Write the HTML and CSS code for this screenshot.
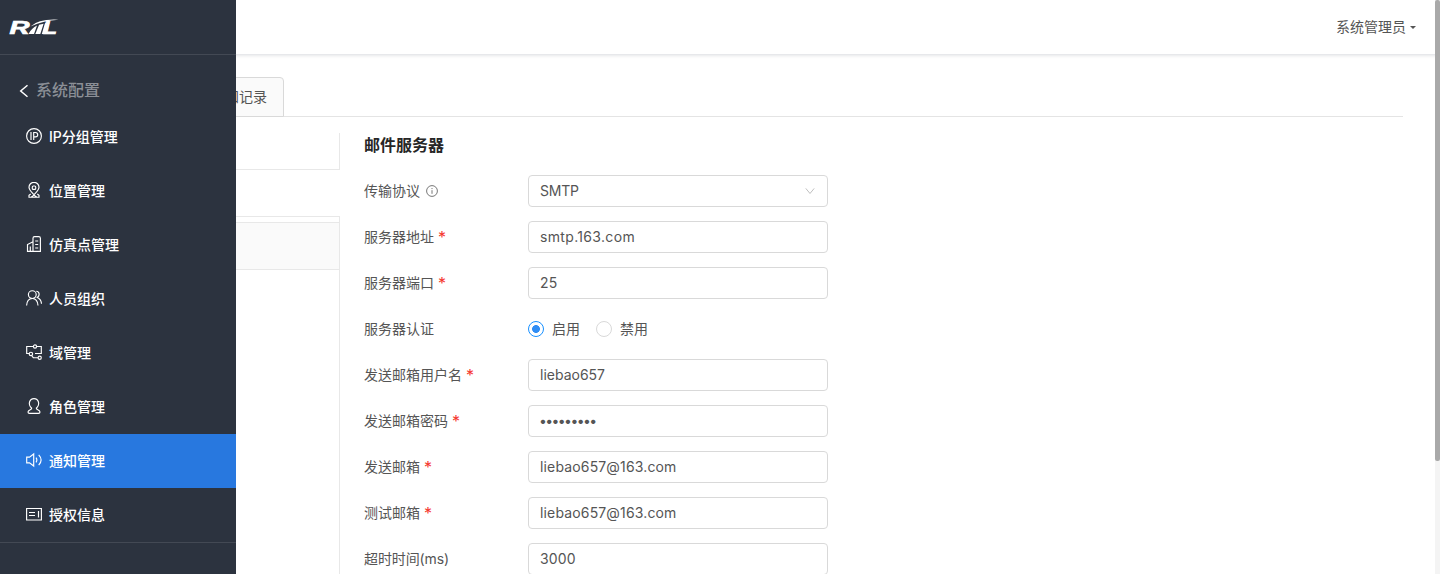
FILE: index.html
```html
<!DOCTYPE html>
<html lang="zh-CN">
<head>
<meta charset="utf-8">
<title>通知管理</title>
<link rel="stylesheet" href="styles.css">
</head>
<body>
<div class="app">
  <header class="topbar"><span class="user">系统管理员</span><i class="caret"></i></header>

  <main class="content">
    <nav class="tabs"><span class="tab">通知记录</span></nav>
    <div class="columns">
      <section class="channels">
        <div class="channel first"></div>
        <div class="channel current"></div>
        <div class="spacer"></div>
        <div class="channel shaded"></div>
        <div class="rest"></div>
      </section>
      <form class="form">
        <h2 class="form-title">邮件服务器</h2>
        <div class="row"><label class="label">传输协议
          <svg class="info" viewBox="0 0 12 12"><circle cx="6" cy="6" r="5.4"/><path d="M6 5.2v3.6M6 3v1.1"/></svg></label>
          <div class="field select">SMTP<svg class="chevron" viewBox="0 0 10 8"><path d="M.8 1.4 5 6.5l4.2-5.1"/></svg></div></div>
        <div class="row"><label class="label">服务器地址<b class="req">*</b></label><div class="field host">smtp.163.com</div></div>
        <div class="row"><label class="label">服务器端口<b class="req">*</b></label><div class="field">25</div></div>
        <div class="row"><label class="label">服务器认证</label>
          <div class="radios"><i class="radio on"></i><span>启用</span><i class="radio"></i><span>禁用</span></div></div>
        <div class="row"><label class="label">发送邮箱用户名<b class="req">*</b></label><div class="field user-name">liebao657</div></div>
        <div class="row"><label class="label">发送邮箱密码<b class="req">*</b></label><div class="field password">•••••••••</div></div>
        <div class="row"><label class="label">发送邮箱<b class="req">*</b></label><div class="field">liebao657@163.com</div></div>
        <div class="row"><label class="label">测试邮箱<b class="req">*</b></label><div class="field">liebao657@163.com</div></div>
        <div class="row"><label class="label ms">超时时间(ms)</label><div class="field">3000</div></div>
      </form>
    </div>
  </main>

  <aside class="sidebar">
    <div class="brand">
      <svg class="logo" viewBox="0 0 52 30">
        <g class="logo-text"><text x="1.500" y="21.700" textLength="20" lengthAdjust="spacingAndGlyphs">R</text><text x="35" y="21.700" textLength="14" lengthAdjust="spacingAndGlyphs">L</text></g>
        <g transform="translate(0 6)">
          <path d="M20.500 16h5.500l3-8.500Q23.500 10 20.500 16zM27.300 16h5l3.300-10.200-4.500 1zM33.800 16h4.500L41.500 4.500l-4.500.8z"/>
          <path d="M22.500 8.400Q31 .6 50.500 1.700 36 2.500 22.500 8.400z"/>
        </g>
      </svg>
    </div>
    <div class="menu">
      <div class="menu-title"><svg class="back" viewBox="0 0 10 14"><path d="M8.500 1.200 1.700 7l6.800 5.800"/></svg><span>系统配置</span></div>
      <div class="item"><svg class="icon" viewBox="0 0 16 16"><circle cx="8" cy="8" r="7.400"/><path d="M5 4v8M7.700 12V4.500h1.800a2.200 2.200 0 0 1 0 4.400H7.700"/></svg>IP分组管理</div>
      <div class="item"><svg class="icon" viewBox="0 0 16 16"><path d="M8 12.700C5.500 10 3 8 3 5.300a5 5 0 0 1 10 0C13 8 10.500 10 8 12.700z"/><rect x="6.300" y="4" width="3.400" height="3.400" rx="1"/><path d="M4.700 12 3 13.200v2h10v-2L11.300 12M5 15.200l3-2 3 2"/></svg>位置管理</div>
      <div class="item"><svg class="icon" viewBox="0 0 16 16"><path d="M7 15.400V2.200Q7 .6 8.500.6h4.200q1.700 0 1.700 1.600v13.200H1.500V8.600L7 5.800"/><path d="M4.300 10.500v4.900M9.200 5h3M9.200 8.500h3M9.200 12h3"/></svg>仿真点管理</div>
      <div class="item"><svg class="icon" viewBox="0 0 16 16"><circle cx="6.300" cy="4.600" r="3.900"/><path d="M.6 15.500C.8 11.500 3 8.700 6.300 8.500s5.600 3 5.700 7M10.300 1.200c3 0 4 4.200 1 6.300 2.500 1 4 3.500 4.200 6.300"/></svg>人员组织</div>
      <div class="item"><svg class="icon" viewBox="0 0 16 16"><path d="M7 2.500H.7v7h2.500M11 2.500h4.300v7H9M5.500 11.500 7.300 13.700H12"/><circle cx="9" cy="2.500" r="1.600"/><circle cx="4.900" cy="9.900" r="1.700"/><circle cx="13.700" cy="13.700" r="1.600"/></svg>域管理</div>
      <div class="item"><svg class="icon" viewBox="0 0 16 16"><path d="M5.700 10.200C1.500 6.500 3.400.6 8 .6s6.500 5.900 2.300 9.600c-.5 1.600 3.700 1.500 3.700 3.900Q14 15.400 12.500 15.400h-9Q2 15.400 2 14.100c0-2.400 4.200-2.300 3.700-3.900z"/></svg>角色管理</div>
      <div class="item active"><svg class="icon" viewBox="0 0 16 16"><path d="M.7 5.100h2.800L7.700 2v12l-4.200-3.100H.7zM10 5.700q1.700 2.200 0 4.600M12.700 2.800q4.800 5 0 10.400"/></svg>通知管理</div>
      <div class="item"><svg class="icon" viewBox="0 0 16 16"><path d="M.6 2.500h14.800v11.500H.6zM3 6.500h6M3 9.500h6M12.500 5v6.500"/></svg>授权信息</div>
    </div>
  </aside>

  <div class="scrollbar"><div class="thumb"></div></div>
</div>
</body>
</html>
```
FILE: styles.css
```css
* { box-sizing: border-box; }
body { margin: 0; overflow: hidden; }
svg { fill: none; stroke: currentColor; flex: none; }
.app {
  position: relative;
  height: 574px;
  overflow: hidden;
  background: #fff;
  color: #555;
  font: 14px/22px Inter, "Noto Sans CJK SC", sans-serif;
}
.topbar {
  height: 54px;
  padding-right: 24px;
  display: flex;
  align-items: center;
  justify-content: flex-end;
  box-shadow: 0 1px 4px rgba(0, 21, 41, .16);
}
.caret {
  margin-left: 4px;
  border: 3px solid transparent;
  border-top-color: #555;
  border-bottom: 0;
}
.content { padding: 23px 37px 0 194px; }
.tabs { height: 40px; border-bottom: 1px solid #e4e4e4; display: flex; }
.tab {
  height: 40px;
  padding: 8px 16px;
  border: 1px solid #d9d9d9;
  border-radius: 4px 4px 0 0;
  background: #fafafa;
}
.columns { display: flex; padding-top: 16px; }
.channels { width: 146px; height: 441px; display: flex; flex-direction: column; }
.channel.first { height: 37px; border: solid #e8e8e8; border-width: 0 1px 1px 0; }
.channel.current { height: 46px; }
.spacer { height: 6px; border: solid #e8e8e8; border-width: 1px 1px 0 0; }
.channel.shaded { height: 48px; background: #fafafa; border: 1px solid #e8e8e8; border-left: 0; }
.rest { flex: 1; border-right: 1px solid #e8e8e8; }
.form { margin-left: 24px; width: 464px; }
.form-title { margin: 0 0 18px; font-size: 16px; line-height: 24px; font-weight: 700; color: #262626; }
.row { display: flex; align-items: center; height: 32px; margin-bottom: 14px; }
.label { width: 164px; display: flex; align-items: center; }
.label.ms { letter-spacing: -.1px; }
.info { width: 12px; height: 12px; margin-left: 6px; color: #777; }
.req { margin-left: 4px; color: #f5362c; font-weight: 400; font-size: 16px; }
.field {
  width: 300px;
  height: 32px;
  padding: 0 12px 0 11px;
  display: flex;
  align-items: center;
  justify-content: space-between;
  border: 1px solid #d9d9d9;
  border-radius: 4px;
  letter-spacing: .15px;
}
.select { letter-spacing: -.2px; }
.host { letter-spacing: .33px; }
.user-name { letter-spacing: 0; }
.password { letter-spacing: -1.6px; padding-left: 10px; }
.chevron { width: 10px; height: 8px; color: #bfbfbf; }
.radios { display: flex; align-items: center; }
.radios span { margin: 0 16px 0 8px; }
.radio { width: 16px; height: 16px; border: 1px solid #d9d9d9; border-radius: 50%; }
.radio.on { border-color: #1890ff; background: radial-gradient(circle, #2f8df5 3.6px, transparent 4.2px); }

.sidebar { position: absolute; top: 0; left: 0; width: 236px; height: 574px; background: #2c333f; color: #fff; }
.brand { height: 55px; padding: 12px 0 0 8px; border-bottom: 1px solid #434954; }
.logo { display: block; width: 52px; height: 30px; fill: #fff; stroke: none; overflow: visible; }
.logo-text { font: italic 700 18px "Liberation Sans", sans-serif; stroke: #fff; stroke-width: .7; }
.menu { height: 488px; padding-top: 17px; border-bottom: 1px solid #434954; }
.menu-title {
  height: 38px;
  padding-left: 19px;
  display: flex;
  align-items: center;
  gap: 7px;
  font-size: 16px;
  font-weight: 500;
  color: #8b8f96;
}
.menu-title span { margin-bottom: 2px; }
.back { width: 10px; height: 14px; color: #fff; stroke-width: 1.5; }
.item { height: 54px; padding-left: 26px; display: flex; align-items: center; gap: 7px; font-weight: 500; }
.item.active { background: #2878df; }
.icon { width: 16px; height: 16px; margin-bottom: 2px; stroke-width: 1.15; }

.scrollbar { position: absolute; top: 0; right: 0; width: 5px; height: 574px; background: #f4f4f4; }
.thumb { height: 461px; background: #a9a9a9; border-radius: 2px; }
```
